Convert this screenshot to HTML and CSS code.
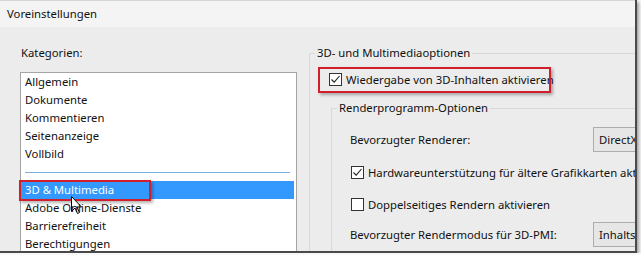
FILE: index.html
```html
<!DOCTYPE html>
<html lang="de">
<head>
<meta charset="UTF-8">
<title>Voreinstellungen</title>
<link rel="stylesheet" href="styles.css">
</head>
<body>
    <div class="window">
        <div class="titlebar">Voreinstellungen</div>
        <div class="content">
            <div class="left">
                <div class="label">Kategorien:</div>
                <ul class="list">
                    <li>Allgemein</li>
                    <li>Dokumente</li>
                    <li>Kommentieren</li>
                    <li>Seitenanzeige</li>
                    <li>Vollbild</li>
                    <li class="sep"></li>
                    <li class="selected">3D &amp; Multimedia
                        <span class="mark mark-list"></span>
                        <svg class="cursor" width="12" height="19" viewBox="0 0 12 19">
                            <path d="M0.5 0.5 L0.5 15.5 L4 12 L6.5 17.5 L8.5 16.5 L6 11 L10.5 11 Z" fill="#fff" stroke="#000" stroke-width="1"/>
                        </svg>
                    </li>
                    <li>Adobe Online-Dienste</li>
                    <li>Barrierefreiheit</li>
                    <li>Berechtigungen</li>
                </ul>
            </div>
            <div class="right">
                <fieldset class="group">
                    <legend>3D- und Multimediaoptionen</legend>
                    <div class="check-row main-check">
                        <span class="box checked">
                            <svg width="11" height="11" viewBox="0 0 11 11"><path d="M1.5 5.5 L4.2 8.2 L9.5 2" fill="none" stroke="#222" stroke-width="1.1"/></svg>
                        </span>
                        Wiedergabe von 3D-Inhalten aktivieren
                        <span class="mark mark-check"></span>
                    </div>
                    <fieldset class="group inner">
                        <legend>Renderprogramm-Optionen</legend>
                        <div class="field-row first">
                            <span class="field-label">Bevorzugter Renderer:</span>
                            <span class="select">DirectX 9</span>
                        </div>
                        <div class="check-row hw">
                            <span class="box checked">
                                <svg width="11" height="11" viewBox="0 0 11 11"><path d="M1.5 5.5 L4.2 8.2 L9.5 2" fill="none" stroke="#222" stroke-width="1.1"/></svg>
                            </span>
                            Hardwareunterstützung für ältere Grafikkarten aktivieren
                        </div>
                        <div class="check-row duplex">
                            <span class="box"></span>
                            Doppelseitiges Rendern aktivieren
                        </div>
                        <div class="field-row last">
                            <span class="field-label">Bevorzugter Rendermodus für 3D-PMI:</span>
                            <span class="select">Inhaltseinstellungen verwenden</span>
                        </div>
                    </fieldset>
                </fieldset>
            </div>
        </div>
    </div>
</body>
</html>
```

FILE: styles.css
```css
body {
    margin: 0;
    padding: 0;
    background: #f8f8f8;
    font-family: "Noto Sans", "Open Sans", sans-serif;
    font-size: 11.3px;
    color: #111;
}
.window {
    width: 635px;
    height: 251px;
    background: #ececec;
    border-right: 2px solid #4a4a4a;
    border-bottom: 2px solid #4a4a4a;
    box-shadow: 2px 2px 3px rgba(0,0,0,0.35);
    overflow: hidden;
}
.titlebar {
    height: 27px;
    line-height: 26px;
    padding-left: 7px;
    background: #f4f4f4;
    border-top: 1px solid #d6d6d6;
    box-sizing: border-box;
}
.content {
    display: flex;
    padding-top: 18px;
}
.left {
    flex: none;
    width: 277px;
    margin-left: 20px;
}
.label {
    line-height: 16px;
    padding-left: 1px;
}
.list {
    list-style: none;
    margin: 11px 0 0 0;
    padding: 0;
    background: white;
    border: 1px solid #a5a5a5;
    height: 200px;
}
.list li {
    position: relative;
    height: 18px;
    line-height: 18px;
    padding-left: 4px;
    margin-right: 2px;
    white-space: nowrap;
}
.list li.sep {
    box-sizing: border-box;
    padding: 9px 0 0 0;
}
.list li.sep::after {
    content: "";
    display: block;
    margin: 0 4px;
    border-top: 1px solid #7aaee0;
}
.list li.selected {
    background: #3399ff;
    color: white;
}
.mark {
    position: absolute;
    border: 2px solid #d21f2c;
    box-shadow: 2px 2px 3px rgba(0,0,0,0.3);
}
.mark-list {
    left: -2px;
    top: -1px;
    width: 128px;
    height: 17px;
}
.cursor {
    position: absolute;
    left: 50px;
    top: 15px;
}
.right {
    flex: none;
    width: 400px;
    margin-left: 12px;
}
.group {
    margin: 0;
    padding: 0;
    min-width: 0;
    border: none;
    border-left: 1px solid #d8d8d8;
    border-top: 1px solid #d8d8d8;
}
.group legend {
    margin-left: 5px;
    padding: 0 2px;
    line-height: 16px;
}
.check-row {
    position: relative;
    display: flex;
    align-items: center;
    height: 18px;
    white-space: nowrap;
}
.box {
    width: 11px;
    height: 11px;
    border: 1px solid #333;
    background: white;
    margin-right: 4px;
    flex: none;
}
.box svg {
    display: block;
}
.main-check {
    margin: 9px 0 0 19px;
}
.mark-check {
    left: -11px;
    top: -3px;
    width: 229px;
    height: 22px;
}
.inner {
    margin: 12px 0 0 21px;
    height: 200px;
}
.field-row {
    display: grid;
    grid-template-columns: 243px 120px;
    align-items: center;
    margin-left: 18px;
    height: 25px;
    white-space: nowrap;
}
.field-row.first {
    margin-top: 11px;
}
.field-row.last {
    margin-top: 9px;
}
.select {
    height: 23px;
    line-height: 23px;
    padding-left: 5px;
    border: 1px solid #adadad;
    background: #e6e6e6;
    overflow: hidden;
}
.hw {
    margin: 11px 0 0 19px;
}
.duplex {
    margin: 14px 0 0 19px;
}
```
